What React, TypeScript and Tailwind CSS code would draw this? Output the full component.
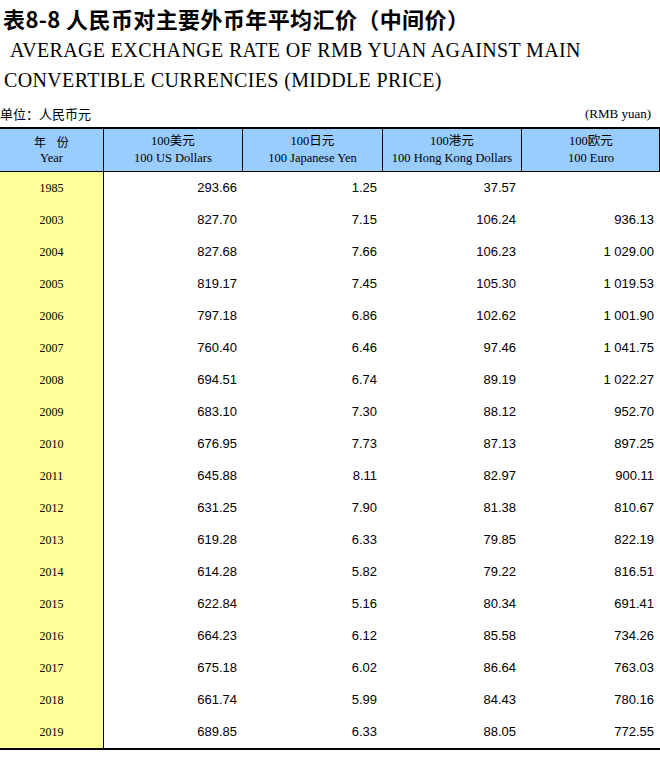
const rows: [string, string, string, string, string][] = [
  ["1985", "293.66", "1.25", "37.57", ""],
  ["2003", "827.70", "7.15", "106.24", "936.13"],
  ["2004", "827.68", "7.66", "106.23", "1 029.00"],
  ["2005", "819.17", "7.45", "105.30", "1 019.53"],
  ["2006", "797.18", "6.86", "102.62", "1 001.90"],
  ["2007", "760.40", "6.46", "97.46", "1 041.75"],
  ["2008", "694.51", "6.74", "89.19", "1 022.27"],
  ["2009", "683.10", "7.30", "88.12", "952.70"],
  ["2010", "676.95", "7.73", "87.13", "897.25"],
  ["2011", "645.88", "8.11", "82.97", "900.11"],
  ["2012", "631.25", "7.90", "81.38", "810.67"],
  ["2013", "619.28", "6.33", "79.85", "822.19"],
  ["2014", "614.28", "5.82", "79.22", "816.51"],
  ["2015", "622.84", "5.16", "80.34", "691.41"],
  ["2016", "664.23", "6.12", "85.58", "734.26"],
  ["2017", "675.18", "6.02", "86.64", "763.03"],
  ["2018", "661.74", "5.99", "84.43", "780.16"],
  ["2019", "689.85", "6.33", "88.05", "772.55"],
];

const heads = [
  ["100美元", "100 US Dollars"],
  ["100日元", "100 Japanese Yen"],
  ["100港元", "100 Hong Kong Dollars"],
  ["100欧元", "100 Euro"],
];

const App = () => {
  return (
    <div className="w-[660px] h-[781px] bg-white text-black overflow-hidden">
      {/* titles */}
      <div className="h-[36px] flex items-center pl-[3px] text-[22px] tracking-[0.4px] font-bold font-['Noto_Sans_CJK_SC',sans-serif] leading-none">
        表8-8 人民币对主要外币年平均汇价（中间价）
      </div>
      <div className="h-[27px] flex items-center pl-[10px] text-[20px] tracking-[0.35px] leading-none font-['Liberation_Serif','Times_New_Roman',serif]">
        AVERAGE EXCHANGE RATE OF RMB YUAN AGAINST MAIN
      </div>
      <div className="h-[33px] flex items-center pl-[4px] text-[20px] tracking-[0.35px] leading-none font-['Liberation_Serif','Times_New_Roman',serif]">
        CONVERTIBLE CURRENCIES (MIDDLE PRICE)
      </div>
      <div className="h-[31px] pt-[5px] flex items-center justify-between pr-[9px]">
        <span className="text-[13px] font-['Noto_Sans_CJK_SC',sans-serif]">单位：人民币元</span>
        <span className="text-[13px] font-['Liberation_Serif','Times_New_Roman',serif]">(RMB yuan)</span>
      </div>

      {/* table */}
      <div className="border-t-2 border-b-2 border-black">
        <div className="grid grid-cols-[104px_139px_140px_139px_138px] h-[43px] bg-[#99ccff] border-b border-black border-r border-r-black">
          <div className="flex flex-col items-center justify-center border-r border-black text-[12.5px] leading-[17px] font-['Liberation_Serif','Times_New_Roman',serif]">
            <span className="font-['Noto_Sans_CJK_SC',sans-serif] text-[12px]">年&nbsp;&nbsp;&nbsp;&nbsp;份</span>
            <span>Year</span>
          </div>
          {heads.map((h, i) => (
            <div
              key={h[1]}
              className={
                i < 3
                  ? "flex flex-col items-center justify-center border-r border-black text-[12.5px] leading-[17px] font-['Liberation_Serif','Noto_Sans_CJK_SC',serif]"
                  : "flex flex-col items-center justify-center text-[12.5px] leading-[17px] font-['Liberation_Serif','Noto_Sans_CJK_SC',serif]"
              }
            >
              <span>{h[0]}</span>
              <span>{h[1]}</span>
            </div>
          ))}
        </div>
        {rows.map((r) => (
          <div key={r[0]} className="grid grid-cols-[104px_139px_140px_139px_138px] h-[32px]">
            <div className="flex items-center justify-center bg-[#ffff99] border-r border-black text-[12px] font-['Liberation_Serif','Times_New_Roman',serif]">
              {r[0]}
            </div>
            {r.slice(1).map((v, j) => (
              <div
                key={j}
                className="flex items-center justify-end pr-[6px] text-[13px] font-['Liberation_Sans',Arial,sans-serif]"
              >
                {v}
              </div>
            ))}
          </div>
        ))}
      </div>
    </div>
  );
};

export default App;
